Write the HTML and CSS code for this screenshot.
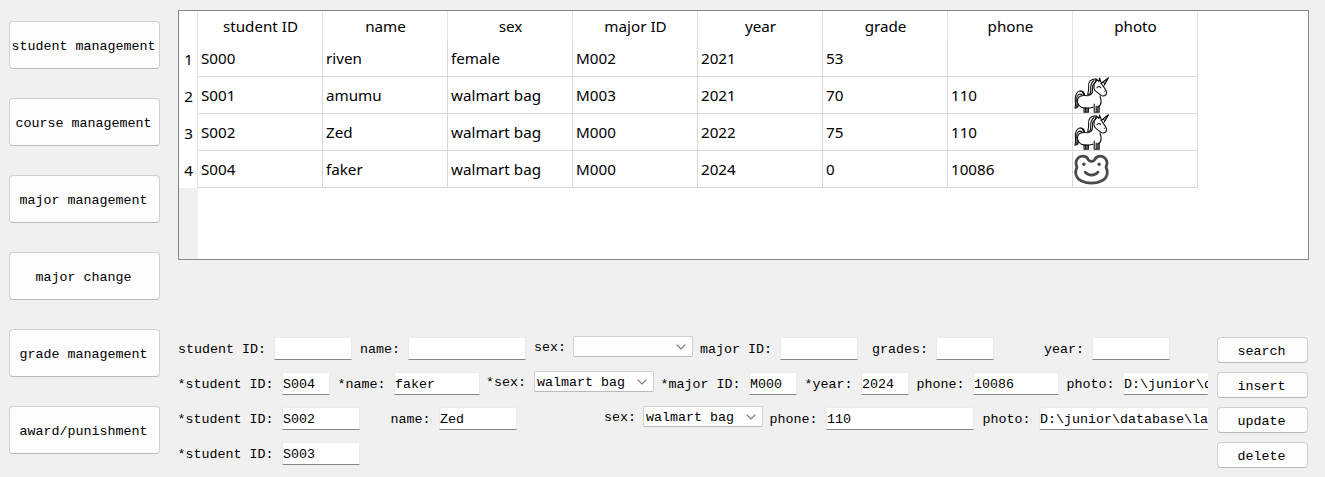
FILE: index.html
```html
<!DOCTYPE html>
<html lang="en">
<head>
<meta charset="utf-8">
<title>Student management</title>
<link rel="stylesheet" href="styles.css">
</head>
<body>
<svg class="defs" width="0" height="0">
  <symbol id="unicorn" viewBox="0 0 36 36">
    <g fill="none" stroke="#111" stroke-width="1.1" stroke-linecap="round" stroke-linejoin="round">
      <path d="M27 6.5L34.5.8L30.2 8.2M29 4.8l1.7 1.7M31 3.3l1.2 1.4"/>
      <path d="M21.5 5.5L22 1.8L25 4.5L25.5 1L27.5 6.5"/>
      <path d="M22 2C17 1.5 14 5 14.6 9.5C15 13 14 15 13.8 17.8C16.5 19 18.8 16.5 18.4 13C18 9.5 18.5 7 21.5 5.5"/>
      <path d="M20 3.5C16.5 6 16.5 10 16.7 12.5C17 15 15.8 17.3 14.5 18M23 3.5C20.7 5 20 6.5 19.8 8.2"/>
      <path d="M27.5 6.8C29 9 32.5 13.2 32.6 15.5C32.6 18.2 29.5 20 27.2 18.4L23.4 15.6C20.8 14 19.3 11.5 20.2 8.5"/>
      <path d="M23 10.8Q24.7 8.3 26.7 10.7M30.3 14.3h.1"/>
      <path d="M13.8 18.8C10 18.2 5.6 18 4 21.5C2.5 25 4 28 6.8 29.9C10 31.5 14 31.5 19 30.2M26 18.8L27 23C27.4 26 26 29 23.8 30"/>
      <path d="M10.5 17.8C10 13.5 5 12.5 2.5 16.5C-.5 21.5 3 25.5 1 31.3C3.2 31 4.5 29.5 4.3 27M7.8 17.8C5.5 16 3 18 2.8 21C2.5 25 3.7 27 2.6 29.3M5 14.2C8 13.5 9 15.5 9.5 17.7"/>
      <path d="M10 31v4.3h4.4V31M11.5 31v4M13 31v4M20.2 27v8.3h2V29M22.2 30v5.3h3V28.5M23.8 30v5"/>
    </g>
  </symbol>
  <symbol id="frog" viewBox="0 0 36 36">
    <path d="M14.3 8.6C13 5.8 11 5.2 8.6 5.2C4.5 5.2 1.9 8.5 2 12.2C2 14 2.9 15 2.9 16.5C1.8 18.5 1.4 21 2 23.6C3.5 29.4 10.5 32.2 17.5 32.2S31.5 29.4 33 23.6C33.6 21 33.2 18.5 32.1 16.5C32.1 15 33 14 33 12.2C33.1 8.5 30.5 5.2 26.4 5.2C24 5.2 22 5.8 20.7 8.6C19.4 11 15.6 11 14.3 8.6Z" fill="none" stroke="#4b4b4b" stroke-width="2.8"/>
    <path d="M11.2 21.2C14.3 25.1 20.9 25.1 24 21.2" fill="none" stroke="#4b4b4b" stroke-width="2.8" stroke-linecap="round"/>
    <circle cx="9.9" cy="13.2" r="1.7" fill="#4b4b4b"/><circle cx="25.1" cy="13.2" r="1.7" fill="#4b4b4b"/>
  </symbol>
  <symbol id="chevron" viewBox="0 0 10 6">
    <path d="M.7.7L5 5L9.3.7" fill="none" stroke="#777" stroke-width="1.1"/>
  </symbol>
</svg>
<div class="window">
  <nav class="menu">
    <button class="btn">student management</button>
    <button class="btn">course management</button>
    <button class="btn">major management</button>
    <button class="btn">major change</button>
    <button class="btn">grade management</button>
    <button class="btn">award/punishment</button>
  </nav>
  <main class="content">
    <div class="table-view">
      <div class="row-head-fill"></div>
      <table class="grid">
        <thead>
          <tr><th class="corner"></th><th>student ID</th><th>name</th><th>sex</th><th>major ID</th><th>year</th><th>grade</th><th>phone</th><th>photo</th></tr>
        </thead>
        <tbody>
          <tr><th>1</th><td>S000</td><td>riven</td><td>female</td><td>M002</td><td>2021</td><td>53</td><td></td><td></td></tr>
          <tr><th>2</th><td>S001</td><td>amumu</td><td>walmart bag</td><td>M003</td><td>2021</td><td>70</td><td>110</td><td class="photo"><svg><use href="#unicorn"/></svg></td></tr>
          <tr><th>3</th><td>S002</td><td>Zed</td><td>walmart bag</td><td>M000</td><td>2022</td><td>75</td><td>110</td><td class="photo"><svg><use href="#unicorn"/></svg></td></tr>
          <tr><th>4</th><td>S004</td><td>faker</td><td>walmart bag</td><td>M000</td><td>2024</td><td>0</td><td>10086</td><td class="photo"><svg><use href="#frog"/></svg></td></tr>
        </tbody>
      </table>
    </div>
    <div class="forms">
      <div class="fields">
        <div class="line search">
          <span>student ID:</span><div class="edit"></div>
          <span>name:</span><div class="edit"></div>
          <span class="up">sex:</span><div class="combo"><svg><use href="#chevron"/></svg></div>
          <span>major ID:</span><div class="edit"></div>
          <span>grades:</span><div class="edit"></div>
          <span>year:</span><div class="edit"></div>
        </div>
        <div class="line insert">
          <span>*student ID:</span><div class="edit">S004</div>
          <span>*name:</span><div class="edit">faker</div>
          <span class="up">*sex:</span><div class="combo">walmart bag<svg><use href="#chevron"/></svg></div>
          <span>*major ID:</span><div class="edit">M000</div>
          <span>*year:</span><div class="edit">2024</div>
          <span>phone:</span><div class="edit">10086</div>
          <span>photo:</span><div class="edit cut">D:\junior\d</div>
        </div>
        <div class="line update">
          <span>*student ID:</span><div class="edit">S002</div>
          <span>name:</span><div class="edit">Zed</div>
          <span class="up">sex:</span><div class="combo">walmart bag<svg><use href="#chevron"/></svg></div>
          <span>phone:</span><div class="edit">110</div>
          <span>photo:</span><div class="edit cut">D:\junior\database\la</div>
        </div>
        <div class="line delete">
          <span>*student ID:</span><div class="edit">S003</div>
        </div>
      </div>
      <div class="actions">
        <button class="btn">search</button>
        <button class="btn">insert</button>
        <button class="btn">update</button>
        <button class="btn">delete</button>
      </div>
    </div>
  </main>
</div>
</body>
</html>
```
FILE: styles.css
```css
* { box-sizing: border-box; }
body {
  margin: 0;
  height: 477px;
  overflow: hidden;
  background: #f0f0f0;
  color: #000;
  font: 13.333px/16px "Liberation Mono", monospace;
}
.defs { position: absolute; }
.window { display: flex; gap: 18px; padding: 10px 0 0 9px; }
.menu { display: flex; flex-direction: column; gap: 29px; width: 151px; padding-top: 11px; }
.btn {
  height: 48px;
  padding: 4px 2px 0 0;
  border: 1px solid #d0d0d0;
  border-bottom-color: #b9b9b9;
  border-radius: 4px;
  background: #fdfdfd;
  color: #000;
  font: inherit;
  white-space: nowrap;
}
.content { width: 1131px; }
.table-view {
  display: grid;
  height: 250px;
  border: 1px solid #828790;
  background: #fff;
}
.row-head-fill { grid-area: 1 / 1; width: 19px; background: #f0f0f0; }
.grid {
  grid-area: 1 / 1;
  align-self: start;
  width: 1019px;
  table-layout: fixed;
  border-collapse: separate;
  border-spacing: 0;
  font: 15.2px/20px "Noto Sans", sans-serif;
}
.grid th, .grid td { height: 37px; padding: 0; font-weight: 400; white-space: nowrap; background: #fff; }
.grid thead th { height: 29px; padding: 1px 0 0 1px; vertical-align: top; line-height: 28px; border-right: 1px solid #e5e5e5; }
.grid .corner { width: 19px; }
.grid tbody th { padding-left: 1px; border-right: 1px solid #e5e5e5; }
.grid td { padding-left: 3px; border-right: 1px solid #d8d8d8; border-bottom: 1px solid #d8d8d8; text-align: left; }
.grid .photo { padding: 0; }
.photo svg { display: block; width: 36px; height: 36px; margin-left: 1px; }
.forms { display: flex; justify-content: space-between; padding: 76px 1px 0 0; }
.fields { display: flex; flex-direction: column; gap: 12px; width: 1030px; padding-top: 1px; }
.line { display: grid; height: 23px; white-space: pre; }
.line span { margin-left: -.5px; padding-top: 5px; }
.search span { margin-left: 0; }
.line .up { margin-left: 0; padding-top: 3px; }
.search { grid-template-columns: 96px 86px 48px 126px 39px 127px 80px 92px 64px 108px 48px 78px; }
.search .edit { width: 78px; }
.search .edit:nth-of-type(2) { width: 118px; }
.search .edit:nth-of-type(5) { width: 58px; }
.insert { grid-template-columns: 104px 56px 56px 92px 48px 127px 88px 56px 56px 56px 56px 94px 56px 85px; }
.insert .edit { width: 48px; }
.insert .edit:nth-of-type(2), .insert .edit:nth-of-type(6) { width: 86px; }
.update { grid-template-columns: 104px 109px 48px 165px 39px 127px 56px 157px 56px 169px; }
.update .edit { width: 78px; }
.update .edit:nth-of-type(4) { width: 148px; }
.delete { grid-template-columns: 104px 78px; }
.line .cut { width: auto; border-right: 0; }
.edit {
  height: 23px;
  padding: 4px 0 0;
  overflow: hidden;
  border: 1px solid #ebebeb;
  border-bottom-color: #868686;
  border-radius: 1px;
  background: #fff;
}
.combo {
  display: flex;
  justify-content: space-between;
  align-items: center;
  width: 120px;
  height: 21px;
  margin-top: -1px;
  padding: 2px 6px 0 2px;
  border: 1px solid #d0d0d0;
  border-bottom-color: #bbb;
  border-radius: 2px;
  background: #fdfdfd;
}
.combo svg { width: 10px; height: 6px; margin: -2px 0 0 auto; }
.actions { display: flex; flex-direction: column; gap: 9px; width: 91px; padding-top: 1px; }
.actions .btn { height: 26px; }
```
